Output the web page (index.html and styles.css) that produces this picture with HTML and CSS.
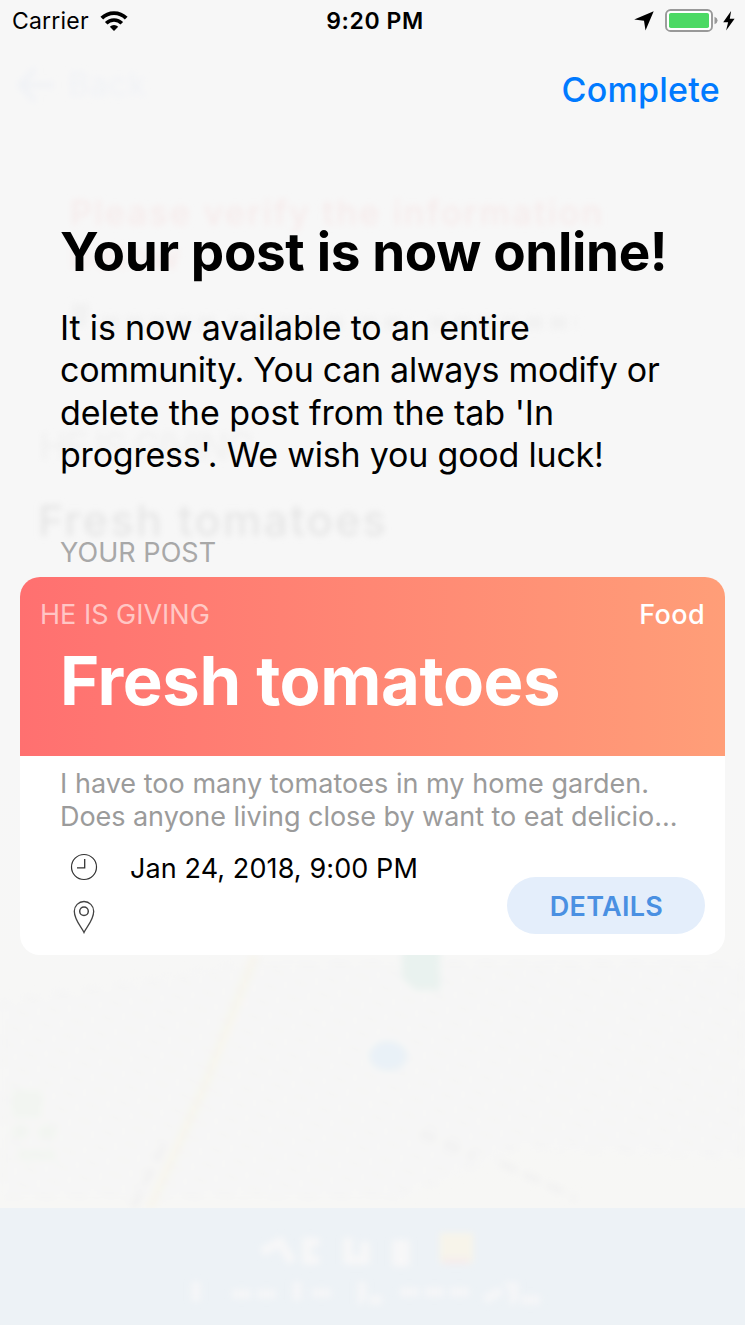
FILE: index.html
```html
<!DOCTYPE html>
<html lang="en">
<head>
<meta charset="utf-8">
<title>Your post is now online</title>
<link rel="stylesheet" href="styles.css">
</head>
<body>
<div class="screen">
  <svg class="backdrop" viewBox="0 0 745 1325" aria-hidden="true">
    <defs>
      <filter id="soft" x="-10%" y="-30%" width="120%" height="160%"><feGaussianBlur stdDeviation="3"/></filter>
      <filter id="softer" x="-20%" y="-20%" width="140%" height="140%"><feGaussianBlur stdDeviation="3.5"/></filter>
      <linearGradient id="land" x1="0" y1="0" x2="0" y2="1">
        <stop offset="0" stop-color="#f7f7f7"/><stop offset="1" stop-color="#f7f7f5"/>
      </linearGradient>
      <pattern id="blocks" width="26" height="17" patternUnits="userSpaceOnUse" patternTransform="rotate(27)">
        <rect width="26" height="17" fill="#f7f7f6"/><rect x="3" y="3" width="19" height="11" rx="4" fill="#f5f5f5"/>
      </pattern>
    </defs>
    <rect y="760" width="745" height="448" fill="url(#land)"/>
    <g filter="url(#softer)">
      <path d="M0 1000L250 960H745V1160L520 1150L400 1200H0Z" fill="url(#blocks)"/>
      <path d="M255 955L205 1085L150 1208" fill="none" stroke="#f7f5ee" stroke-width="9"/>
      <path d="M402 945H440V990H416L402 978Z" fill="#e9f2ef"/>
      <ellipse cx="388" cy="1056" rx="19" ry="15" fill="#e9f1f7"/>
      <path d="M12 1090H42V1118H12ZM12 1126H28V1138H12ZM38 1126H56V1138H38ZM18 1150H56V1160H18Z" fill="#f2f5f1"/>
      <path d="M420 1132L475 1157M500 1163L576 1198M164 1145L133 1208" fill="none" stroke="#f1f1f1" stroke-width="6" stroke-dasharray="18 8"/>
    </g>
    <rect y="1208" width="745" height="117" fill="#edf2f6"/>
    <g filter="url(#soft)">
      <path d="M20 85H54M35 69L20 85L35 101" fill="none" stroke="#f0f2f6" stroke-width="5"/>
      <text class="ghost ghost-back" x="68" y="96" textLength="78">Back</text>
      <text class="ghost ghost-alert" x="70" y="225" textLength="532">Please verify the information</text>
      <text class="ghost ghost-alert" x="70" y="269" textLength="110">below</text>
      <path d="M72 310H92M80 310V332M102 323H215M230 323H345M360 323H410M430 323H577" fill="none" stroke="#f2f2f2" stroke-width="13" stroke-dasharray="17 7"/>
      <text class="ghost ghost-label" x="39" y="460" textLength="216">HE IS GIVING</text>
      <text class="ghost ghost-name" x="38" y="536" textLength="348">Fresh tomatoes</text>
      <path d="M262 1252L280 1242L292 1262M319 1242H307V1260H319M348 1238V1260H365V1242M397 1240V1262H405V1240" fill="none" stroke="#f7f7f8" stroke-width="9"/>
      <rect x="440" y="1233" width="33" height="30" fill="#f7f4ea"/>
      <path d="M443 1261H469" stroke="#f5eded" stroke-width="7"/>
      <path d="M196 1282V1302M232 1294H278M297 1282V1300M312 1293H336M362 1282V1300H382M400 1292H475M485 1300L510 1285M514 1282V1300H545" fill="none" stroke="#f5f6f8" stroke-width="9" stroke-dasharray="19 6"/>
    </g>
  </svg>

  <header class="status">
    <div class="status-left">
      <span class="carrier">Carrier</span>
      <svg class="wifi" viewBox="0 0 28 20">
        <path d="M1.8 7.2A17.2 17.2 0 0 1 26.2 7.2" fill="none" stroke="#000" stroke-width="3.9"/>
        <path d="M6.2 12.3A10.8 10.8 0 0 1 21.8 12.3" fill="none" stroke="#000" stroke-width="3.6"/>
        <path d="M9.8 15.7A6.2 6.2 0 0 1 18.2 15.7L14 20Z"/>
      </svg>
    </div>
    <span class="time">9:20 PM</span>
    <div class="status-right">
      <svg class="locate" viewBox="0 0 20 20"><path d="M19.7 .2L11.5 19.6L10 9.8L.2 8.4Z"/></svg>
      <svg class="battery" viewBox="0 0 54 24">
        <rect x="1" y="1" width="46" height="21" rx="4.6" fill="#fff" stroke="#999" stroke-width="1.9"/>
        <rect x="4" y="4" width="40" height="15" rx="1.8" fill="#4cd964"/>
        <path d="M49.5 7.7Q52.6 9 52.6 11.5T49.5 15.3Z" fill="#999"/>
      </svg>
      <svg class="bolt" viewBox="0 0 12 20"><path d="M8.1 0L.2 11.2H5.1L3.1 19.5L11.6 7.7H6.8Z"/></svg>
    </div>
  </header>

  <nav class="nav"><a class="complete">Complete</a></nav>

  <main>
    <h1 class="title">Your post is now online!</h1>
    <p class="message">
      <span class="line m1">It is now available to an entire</span>
      <span class="line m2">community. You can always modify or</span>
      <span class="line m3">delete the post from the tab 'In</span>
      <span class="line m4">progress'. We wish you good luck!</span>
    </p>
    <h2 class="section">YOUR POST</h2>

    <article class="card">
      <div class="card-head">
        <div class="card-meta"><span class="kind">HE IS GIVING</span><span class="category">Food</span></div>
        <h3 class="name">Fresh tomatoes</h3>
      </div>
      <div class="card-body">
        <p class="description">
          <span class="line d1">I have too many tomatoes in my home garden.</span>
          <span class="line d2">Does anyone living close by want to eat delicio...</span>
        </p>
        <div class="card-foot">
          <div class="facts">
            <div class="fact">
              <svg class="clock" viewBox="0 0 28 28"><circle cx="14" cy="14" r="12.5" fill="none" stroke="#333" stroke-width="1.2"/><path d="M14.7 6V14.8H7" fill="none" stroke="#333" stroke-width="1.3"/></svg>
              <span class="date">Jan 24, 2018, 9:00 PM</span>
            </div>
            <div class="fact">
              <svg class="pin" viewBox="0 0 28 34"><path d="M14 32.5C12 27.8 4.3 20 4.3 11.2A9.7 9.7 0 0 1 23.7 11.2C23.7 20 16 27.8 14 32.5Z" fill="none" stroke="#444" stroke-width="1.3"/><circle cx="14" cy="11.2" r="4.3" fill="none" stroke="#444" stroke-width="1.5"/></svg>
            </div>
          </div>
          <button class="details">DETAILS</button>
        </div>
      </div>
    </article>
  </main>
</div>
</body>
</html>
```
FILE: styles.css
```css
* { box-sizing: border-box; }
body { margin: 0; font-family: Inter, "Liberation Sans", sans-serif; color: #000; }
h1, h2, h3, p { margin: 0; }
svg { display: block; flex: none; }

.screen { position: relative; width: 745px; height: 1325px; overflow: hidden; background: #f7f7f7; }
.backdrop { position: absolute; inset: 0; width: 745px; height: 1325px; }
.ghost { font-family: Inter, sans-serif; }
.ghost-back { font-size: 32px; fill: #f0f2f6; }
.ghost-alert { font-size: 34px; font-weight: 500; fill: #f6ebeb; }
.ghost-label { font-size: 38px; fill: #f0f0f0; }
.ghost-name { font-size: 43px; font-weight: 500; fill: #e6e6e6; }

.status { position: relative; display: grid; grid-template-columns: 1fr auto 1fr; align-items: center; height: 40px; padding: 0 10px 0 12px; font-size: 23px; line-height: 40px; }
.status-left { display: flex; align-items: center; gap: 11px; }
.status-right { display: flex; align-items: center; justify-content: flex-end; }
.carrier { padding-top: 1px; letter-spacing: .2px; }
.wifi { width: 28px; height: 20px; }
.time { padding: 1px 0 0 3px; font-weight: 600; letter-spacing: .6px; }
.locate { width: 20px; height: 20px; margin-right: 11px; }
.battery { width: 54px; height: 24px; margin-right: 4px; }
.bolt { width: 12px; height: 20px; }

.nav { position: relative; display: flex; justify-content: flex-end; height: 100px; padding: 29px 25px 0 0; }
.complete { color: #007aff; font-size: 34px; line-height: 42px; font-weight: 500; letter-spacing: .25px; }

main { position: relative; padding: 0 20px; }
.title { padding: 79px 0 0 40px; font-size: 53px; line-height: 66px; font-weight: 700; letter-spacing: -.35px; white-space: nowrap; }
.message { padding: 21.5px 0 0 40px; font-size: 34px; line-height: 42.5px; }
.line { display: block; width: max-content; white-space: nowrap; }
.m1 { letter-spacing: -.16px; }
.m2 { letter-spacing: -.29px; }
.m3 { letter-spacing: -.02px; }
.m4 { letter-spacing: -.21px; }
.section { padding: 59.5px 0 0 40px; font-size: 27px; line-height: 34px; font-weight: 400; letter-spacing: .05px; color: #a8a8a8; }

.card { margin-top: 7px; height: 378px; border-radius: 20px; overflow: hidden; background: #fff; }
.card-head { height: 179px; padding: 21px 20px 0; background: linear-gradient(90deg, #ff7070, #ff9e78); color: #fff; }
.card-meta { display: flex; justify-content: space-between; font-size: 27px; line-height: 34px; }
.kind { color: rgba(255, 255, 255, .6); }
.category { font-weight: 500; letter-spacing: .4px; }
.name { padding: 9px 0 0 20px; font-size: 67px; line-height: 80px; font-weight: 700; letter-spacing: -.42px; white-space: nowrap; }
.card-body { padding: 11px 20px 20px 40px; }
.description { font-size: 27px; line-height: 33px; color: #9b9b9b; }
.d1 { letter-spacing: .03px; }
.d2 { letter-spacing: -.05px; }
.card-foot { display: flex; justify-content: space-between; align-items: flex-end; margin-top: 17px; }
.facts { display: flex; flex-direction: column; gap: 16px; padding-left: 10px; }
.fact { display: flex; align-items: center; gap: 32px; height: 34px; font-size: 27px; }
.date { padding-top: 2px; letter-spacing: .1px; }
.clock { width: 28px; height: 28px; }
.pin { width: 28px; height: 34px; }
.details { width: 198px; height: 57px; margin: 0; padding: 2px 0 0 1px; border: 0; border-radius: 29px; background: #e4eefb; color: #4a90e2; font: 600 27px/55px Inter, sans-serif; letter-spacing: .3px; }
```
